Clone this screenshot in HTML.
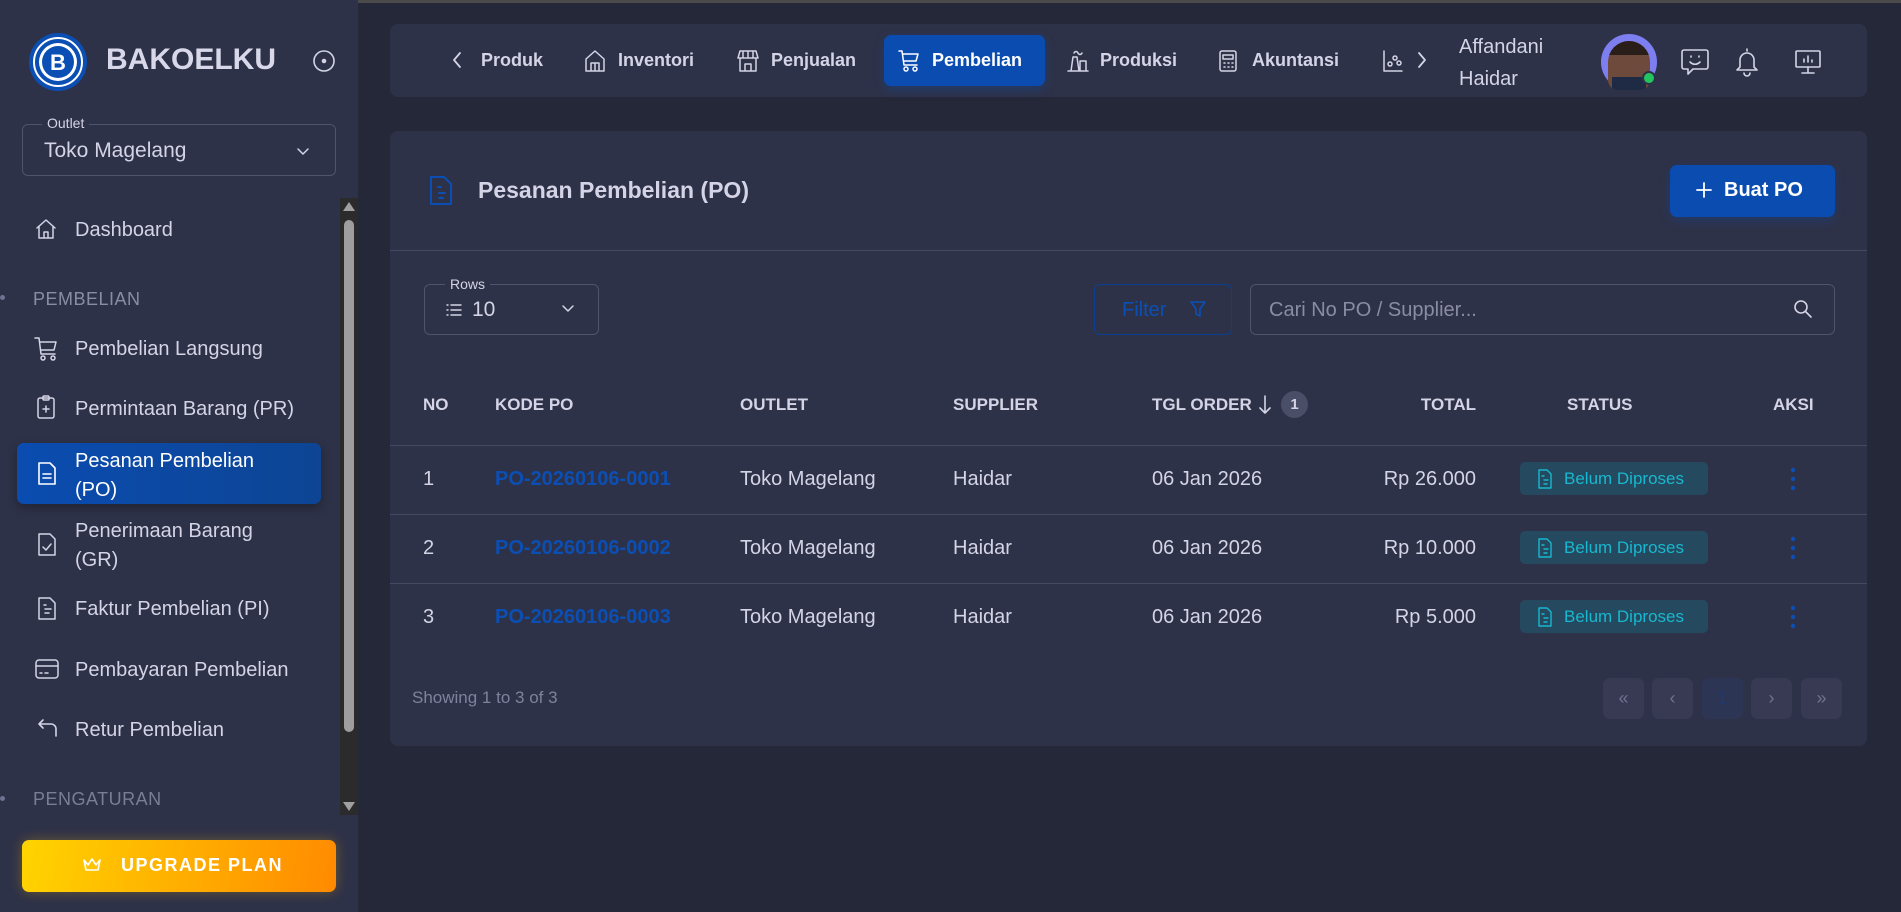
<!DOCTYPE html>
<html><head><meta charset="utf-8"><style>
*{box-sizing:border-box;margin:0;padding:0}
body{width:1901px;height:912px;overflow:hidden;background:#252839;font-family:"Liberation Sans",sans-serif;color:#d4d4e6;position:relative}
.a{position:absolute;white-space:nowrap}
svg{position:absolute;fill:none;stroke-linecap:round;stroke-linejoin:round}
.side{position:absolute;left:0;top:0;width:358px;height:912px;background:#2e3248}
.mi{font-size:20px;color:#d4d4e6}
.sec{font-size:18px;color:#8a8ca3;letter-spacing:.5px}
.nav{font-size:18px;font-weight:bold;color:#d4d4e6}
.th{font-size:17px;font-weight:bold;color:#d4d4e6}
.td{font-size:20px;color:#d4d4e6}
.link{font-size:20px;color:#0b4fb5;font-weight:bold}
.badge{position:absolute;left:1520px;width:188px;height:33px;background:#25495e;border-radius:5px;color:#17b8d0;font-size:17px}
.pg{position:absolute;top:678px;width:41px;height:41px;border-radius:7px;background:#373a52;color:#6f7390;font-size:18px;text-align:center;line-height:41px}
.dot{fill:#0b4fb5;stroke:none}
</style></head><body>
<div class="a" style="left:0;top:0;width:1901px;height:3px;background:#4a4a4a"></div>
<div class="side"></div>
<svg style="left:28px;top:32px" width="60" height="60" viewBox="0 0 60 60"><circle cx="30" cy="30" r="29" style="fill:#0b4fb5;stroke:none"/><circle cx="30" cy="30" r="24" stroke="#fff" stroke-width="2"/><circle cx="30" cy="30" r="19" style="fill:#fff;stroke:none"/><circle cx="30" cy="30" r="16" style="fill:#0b4fb5;stroke:none"/><text x="30" y="38" text-anchor="middle" font-size="22" font-weight="bold" style="fill:#fff" font-family="Liberation Sans">B</text></svg>
<div class="a" style="left:106px;top:43px;font-size:30px;font-weight:bold;color:#d8d8ea">BAKOELKU</div>
<svg style="left:312px;top:49px" width="24" height="24" viewBox="0 0 24 24" stroke="#d4d4e6" stroke-width="1.6"><circle cx="12" cy="12" r="10"/><circle cx="12" cy="12" r="1.5" style="fill:#d4d4e6"/></svg>
<div class="a" style="left:22px;top:124px;width:314px;height:52px;border:1px solid #4f536b;border-radius:6px"></div>
<div class="a" style="left:42px;top:115px;font-size:14px;background:#2e3248;padding:0 5px;color:#d4d4e6">Outlet</div>
<div class="a" style="left:44px;top:139px;font-size:21px">Toko Magelang</div>
<svg style="left:296px;top:144px" width="14" height="14" viewBox="0 0 14 14" stroke="#d4d4e6" stroke-width="1.5"><path d="M2 5l5 5 5-5"/></svg>
<div class="a" style="left:340px;top:198px;width:18px;height:617px;background:#2b2b2b"></div>
<div class="a" style="left:344px;top:220px;width:10px;height:512px;background:#9e9e9e;border-radius:5px"></div>
<div class="a" style="left:343px;top:202px;width:0;height:0;border-left:6px solid transparent;border-right:6px solid transparent;border-bottom:9px solid #a0a0a0"></div>
<div class="a" style="left:343px;top:802px;width:0;height:0;border-left:6px solid transparent;border-right:6px solid transparent;border-top:9px solid #a0a0a0"></div>
<svg style="left:34px;top:217px" width="24" height="24" viewBox="0 0 24 24" stroke="#d4d4e6" stroke-width="1.5"><path d="M3 11l9-8 9 8M5 9v12h14V9M10 21v-6h4v6"/></svg>
<div class="a mi" style="left:75px;top:219px">Dashboard</div>
<div class="a" style="left:0;top:295px;width:5px;height:5px;border-radius:50%;background:#6f7390"></div>
<div class="a sec" style="left:33px;top:289px">PEMBELIAN</div>
<svg style="left:34px;top:336px" width="24" height="26" viewBox="0 0 24 26" stroke="#d4d4e6" stroke-width="1.5"><path d="M1 2h4l2 16h14M6 6h16l-2 8H7"/><circle cx="9" cy="22" r="2"/><circle cx="19" cy="22" r="2"/></svg>
<div class="a mi" style="left:75px;top:338px">Pembelian Langsung</div>
<svg style="left:34px;top:394px" width="24" height="26" viewBox="0 0 24 26" stroke="#d4d4e6" stroke-width="1.5"><rect x="4" y="4" width="16" height="20" rx="2"/><rect x="9" y="2" width="6" height="4" rx="1"/><path d="M12 12v6M9 15h6"/></svg>
<div class="a mi" style="left:75px;top:398px">Permintaan Barang (PR)</div>
<div class="a" style="left:17px;top:443px;width:304px;height:61px;border-radius:7px;background:linear-gradient(90deg,#0a4cb0,#0d4594);box-shadow:0 4px 10px rgba(0,0,0,.3)"></div>
<svg style="left:36px;top:461px" width="22" height="26" viewBox="0 0 22 26" stroke="#fff" stroke-width="1.6"><path d="M3 2h11l5 5v16H3z"/><path d="M7 13h8M7 17h8"/></svg>
<div class="a mi" style="left:75px;top:447px;color:#fff;line-height:29px">Pesanan Pembelian<br>(PO)</div>
<svg style="left:36px;top:532px" width="22" height="26" viewBox="0 0 22 26" stroke="#d4d4e6" stroke-width="1.5"><path d="M3 2h11l5 5v16H3z"/><path d="M7 15l3 3 5-6"/></svg>
<div class="a mi" style="left:75px;top:517px;line-height:29px">Penerimaan Barang<br>(GR)</div>
<svg style="left:36px;top:596px" width="22" height="26" viewBox="0 0 22 26" stroke="#d4d4e6" stroke-width="1.5"><path d="M3 2h11l5 5v16H3z"/><path d="M8 9h2M9 13h6M9 17h4"/></svg>
<div class="a mi" style="left:75px;top:598px">Faktur Pembelian (PI)</div>
<svg style="left:34px;top:658px" width="26" height="22" viewBox="0 0 26 22" stroke="#d4d4e6" stroke-width="1.5"><rect x="2" y="2" width="22" height="18" rx="3"/><path d="M2 8h22M6 15h2M11 15h3"/></svg>
<div class="a mi" style="left:75px;top:659px">Pembayaran Pembelian</div>
<svg style="left:36px;top:716px" width="24" height="24" viewBox="0 0 24 24" stroke="#d4d4e6" stroke-width="1.6"><path d="M7 4L3 8l4 4M3 8h12a5 5 0 015 5v7"/></svg>
<div class="a mi" style="left:75px;top:719px">Retur Pembelian</div>
<div class="a" style="left:0;top:796px;width:5px;height:5px;border-radius:50%;background:#6f7390"></div>
<div class="a sec" style="left:33px;top:789px;color:#7a7d94">PENGATURAN</div>
<div class="a" style="left:22px;top:840px;width:314px;height:52px;border-radius:7px;background:linear-gradient(100deg,#ffd400,#ffa800 60%,#ff8a00);box-shadow:0 0 12px rgba(255,180,0,.3)"></div>
<svg style="left:82px;top:857px" width="20" height="16" viewBox="0 0 20 16" stroke="#fff" stroke-width="1.6"><path d="M2 3l4 5 4-6 4 6 4-5-2 10H4z"/></svg>
<div class="a" style="left:121px;top:855px;font-size:18px;font-weight:bold;color:#fff;letter-spacing:1.5px">UPGRADE PLAN</div>

<div class="a" style="left:390px;top:24px;width:1477px;height:73px;background:#2e3248;border-radius:8px"></div>
<svg style="left:451px;top:51px" width="12" height="18" viewBox="0 0 12 18" stroke="#d4d4e6" stroke-width="1.8"><path d="M9 2L3 9l6 7"/></svg>
<div class="a nav" style="left:481px;top:50px">Produk</div>
<svg style="left:584px;top:49px" width="22" height="24" viewBox="0 0 22 24" stroke="#d4d4e6" stroke-width="1.5"><path d="M2 10L11 2l9 8v12H2zM7 22v-8h8v8M11 14v8"/></svg>
<div class="a nav" style="left:618px;top:50px">Inventori</div>
<svg style="left:737px;top:49px" width="22" height="24" viewBox="0 0 22 24" stroke="#d4d4e6" stroke-width="1.5"><path d="M3 2h16l2 7H1zM3 9v13h16V9M8 22v-7h6v7M6 2v7M11 2v7M16 2v7"/></svg>
<div class="a nav" style="left:771px;top:50px">Penjualan</div>
<div class="a" style="left:884px;top:35px;width:161px;height:51px;background:#0a4cb0;border-radius:7px;box-shadow:0 4px 10px rgba(10,76,176,.35)"></div>
<svg style="left:898px;top:49px" width="22" height="24" viewBox="0 0 22 24" stroke="#fff" stroke-width="1.5"><path d="M1 2h3l2 14h13M5 5h15l-2 7H6"/><circle cx="8" cy="20" r="2"/><circle cx="17" cy="20" r="2"/></svg>
<div class="a nav" style="left:932px;top:50px;color:#fff">Pembelian</div>
<svg style="left:1066px;top:49px" width="24" height="24" viewBox="0 0 24 24" stroke="#d4d4e6" stroke-width="1.5"><path d="M2 22h20M5 22l2-14h4l2 14M14 22V12h6v10M8 4c1-2 3-2 4 0s3 2 4 0"/></svg>
<div class="a nav" style="left:1100px;top:50px">Produksi</div>
<svg style="left:1218px;top:49px" width="20" height="24" viewBox="0 0 20 24" stroke="#d4d4e6" stroke-width="1.5"><rect x="2" y="2" width="16" height="20" rx="2"/><path d="M5 6h10v4H5zM6 14h1M10 14h1M14 14h1M6 18h1M10 18h1M14 18h1"/></svg>
<div class="a nav" style="left:1252px;top:50px">Akuntansi</div>
<svg style="left:1382px;top:49px" width="22" height="24" viewBox="0 0 22 24" stroke="#d4d4e6" stroke-width="1.5"><path d="M2 2v20h18"/><circle cx="8" cy="15" r="2"/><circle cx="13" cy="9" r="2"/><circle cx="17" cy="14" r="2"/></svg>
<svg style="left:1416px;top:51px" width="12" height="18" viewBox="0 0 12 18" stroke="#d4d4e6" stroke-width="1.8"><path d="M3 2l6 7-6 7"/></svg>
<div class="a" style="left:1459px;top:31px;font-size:20px;line-height:32px;color:#d4d4e6">Affandani<br>Haidar</div>
<div class="a" style="left:1601px;top:34px;width:56px;height:56px;border-radius:50%;background:#7d7ff0"></div>
<div class="a" style="left:1608px;top:41px;width:42px;height:49px;border-radius:21px 21px 10px 10px;background:#6d4a3c;overflow:hidden"><div style="position:absolute;left:0;top:0;width:42px;height:14px;background:#2a1e1a"></div><div style="position:absolute;left:4px;top:36px;width:34px;height:13px;background:#1f2a44"></div></div>
<div class="a" style="left:1642px;top:71px;width:14px;height:14px;border-radius:50%;background:#22c55e;border:2px solid #2e3248"></div>
<svg style="left:1680px;top:47px" width="30" height="30" viewBox="0 0 30 30" stroke="#d4d4e6" stroke-width="1.6"><path d="M4 3h22a2 2 0 012 2v15a2 2 0 01-2 2H13l-5 5v-5H4a2 2 0 01-2-2V5a2 2 0 012-2z"/><path d="M11 9v1M19 9v1M10 15c3 3 7 3 10 0"/></svg>
<svg style="left:1734px;top:47px" width="26" height="30" viewBox="0 0 26 30" stroke="#d4d4e6" stroke-width="1.6"><path d="M13 2v2M6 20V13a7 7 0 0114 0v7l3 3H3zM10 26a3 3 0 006 0"/></svg>
<svg style="left:1794px;top:48px" width="28" height="28" viewBox="0 0 28 28" stroke="#d4d4e6" stroke-width="1.6"><rect x="2" y="3" width="24" height="16" rx="1"/><path d="M14 19v5M8 25h12M10 14v-3M14 14V8M18 14v-2"/></svg>

<div class="a" style="left:390px;top:131px;width:1477px;height:615px;background:#2e3248;border-radius:8px"></div>
<svg style="left:428px;top:175px" width="26" height="32" viewBox="0 0 26 32" stroke="#0b4fb5" stroke-width="2"><path d="M3 2h13l7 7v20H3z"/><path d="M10 12h3M11 18h6M11 23h4"/></svg>
<div class="a" style="left:478px;top:177px;font-size:23px;font-weight:bold;color:#d4d4e6">Pesanan Pembelian (PO)</div>
<div class="a" style="left:1670px;top:165px;width:165px;height:52px;background:#0a4cb0;border-radius:7px;box-shadow:0 4px 10px rgba(10,76,176,.3)"></div>
<svg style="left:1695px;top:181px" width="18" height="18" viewBox="0 0 18 18" stroke="#fff" stroke-width="1.8"><path d="M9 2v14M2 9h14"/></svg>
<div class="a" style="left:1724px;top:179px;font-size:20px;font-weight:bold;color:#fff">Buat PO</div>
<div class="a" style="left:390px;top:250px;width:1477px;height:1px;background:#454961"></div>

<div class="a" style="left:424px;top:284px;width:175px;height:51px;border:1px solid #4f536b;border-radius:6px"></div>
<div class="a" style="left:445px;top:276px;font-size:14px;background:#2e3248;padding:0 5px">Rows</div>
<svg style="left:446px;top:303px" width="16" height="14" viewBox="0 0 16 14" stroke="#d4d4e6" stroke-width="1.4"><path d="M1 2h1M1 7h1M1 12h1M5 2h10M5 7h10M5 12h10"/></svg>
<div class="a" style="left:472px;top:298px;font-size:21px">10</div>
<svg style="left:561px;top:303px" width="14" height="12" viewBox="0 0 14 12" stroke="#d4d4e6" stroke-width="1.5"><path d="M2 3l5 5 5-5"/></svg>
<div class="a" style="left:1094px;top:284px;width:138px;height:51px;border:1px solid #0b3f8f;border-radius:6px"></div>
<div class="a" style="left:1122px;top:299px;font-size:20px;color:#0b4fb5">Filter</div>
<svg style="left:1190px;top:300px" width="16" height="18" viewBox="0 0 16 18" stroke="#0b4fb5" stroke-width="1.6"><path d="M1 2h14l-5 7v7l-4-2V9z"/></svg>
<div class="a" style="left:1250px;top:284px;width:585px;height:51px;border:1px solid #4f536b;border-radius:6px"></div>
<div class="a" style="left:1269px;top:299px;font-size:20px;color:#8a8ca3">Cari No PO / Supplier...</div>
<svg style="left:1793px;top:299px" width="20" height="20" viewBox="0 0 20 20" stroke="#d4d4e6" stroke-width="1.6"><circle cx="8" cy="8" r="6"/><path d="M13 13l5 5"/></svg>

<div class="a th" style="left:423px;top:395px">NO</div>
<div class="a th" style="left:495px;top:395px">KODE PO</div>
<div class="a th" style="left:740px;top:395px">OUTLET</div>
<div class="a th" style="left:953px;top:395px">SUPPLIER</div>
<div class="a th" style="left:1152px;top:395px">TGL ORDER</div>
<svg style="left:1258px;top:394px" width="14" height="22" viewBox="0 0 14 22" stroke="#d4d4e6" stroke-width="1.6"><path d="M7 2v17M2 14l5 5 5-5"/></svg>
<div class="a" style="left:1281px;top:391px;width:27px;height:27px;border-radius:50%;background:#4a4e66;font-size:15px;font-weight:bold;text-align:center;line-height:27px">1</div>
<div class="a th" style="left:1420px;top:395px;width:56px;text-align:right">TOTAL</div>
<div class="a th" style="left:1567px;top:395px">STATUS</div>
<div class="a th" style="left:1773px;top:395px">AKSI</div>
<div class="a" style="left:390px;top:445px;width:1477px;height:1px;background:#454961"></div>
<div class="a" style="left:390px;top:514px;width:1477px;height:1px;background:#454961"></div>
<div class="a" style="left:390px;top:583px;width:1477px;height:1px;background:#454961"></div>

<div class="a td" style="left:423px;top:468px">1</div>
<div class="a link" style="left:495px;top:468px">PO-20260106-0001</div>
<div class="a td" style="left:740px;top:468px">Toko Magelang</div>
<div class="a td" style="left:953px;top:468px">Haidar</div>
<div class="a td" style="left:1152px;top:468px">06 Jan 2026</div>
<div class="a td" style="left:1300px;top:468px;width:176px;text-align:right">Rp 26.000</div>
<div class="badge" style="top:462px"></div>

<div class="a td" style="left:423px;top:537px">2</div>
<div class="a link" style="left:495px;top:537px">PO-20260106-0002</div>
<div class="a td" style="left:740px;top:537px">Toko Magelang</div>
<div class="a td" style="left:953px;top:537px">Haidar</div>
<div class="a td" style="left:1152px;top:537px">06 Jan 2026</div>
<div class="a td" style="left:1300px;top:537px;width:176px;text-align:right">Rp 10.000</div>
<div class="badge" style="top:531px"></div>

<div class="a td" style="left:423px;top:606px">3</div>
<div class="a link" style="left:495px;top:606px">PO-20260106-0003</div>
<div class="a td" style="left:740px;top:606px">Toko Magelang</div>
<div class="a td" style="left:953px;top:606px">Haidar</div>
<div class="a td" style="left:1152px;top:606px">06 Jan 2026</div>
<div class="a td" style="left:1300px;top:606px;width:176px;text-align:right">Rp 5.000</div>
<div class="badge" style="top:600px"></div>

<svg style="left:1537px;top:469px" width="16" height="20" viewBox="0 0 16 20" stroke="#17b8d0" stroke-width="1.4"><path d="M2 1h8l4 4v14H2z"/><path d="M5 7h2M7 11h4M7 15h3"/></svg>
<div class="a" style="left:1564px;top:469px;font-size:17px;color:#17b8d0">Belum Diproses</div>
<svg style="left:1537px;top:538px" width="16" height="20" viewBox="0 0 16 20" stroke="#17b8d0" stroke-width="1.4"><path d="M2 1h8l4 4v14H2z"/><path d="M5 7h2M7 11h4M7 15h3"/></svg>
<div class="a" style="left:1564px;top:538px;font-size:17px;color:#17b8d0">Belum Diproses</div>
<svg style="left:1537px;top:607px" width="16" height="20" viewBox="0 0 16 20" stroke="#17b8d0" stroke-width="1.4"><path d="M2 1h8l4 4v14H2z"/><path d="M5 7h2M7 11h4M7 15h3"/></svg>
<div class="a" style="left:1564px;top:607px;font-size:17px;color:#17b8d0">Belum Diproses</div>

<svg style="left:1787px;top:466px" width="12" height="26" viewBox="0 0 12 26"><circle class="dot" cx="6" cy="4" r="2.2"/><circle class="dot" cx="6" cy="13" r="2.2"/><circle class="dot" cx="6" cy="22" r="2.2"/></svg>
<svg style="left:1787px;top:535px" width="12" height="26" viewBox="0 0 12 26"><circle class="dot" cx="6" cy="4" r="2.2"/><circle class="dot" cx="6" cy="13" r="2.2"/><circle class="dot" cx="6" cy="22" r="2.2"/></svg>
<svg style="left:1787px;top:604px" width="12" height="26" viewBox="0 0 12 26"><circle class="dot" cx="6" cy="4" r="2.2"/><circle class="dot" cx="6" cy="13" r="2.2"/><circle class="dot" cx="6" cy="22" r="2.2"/></svg>

<div class="a" style="left:412px;top:688px;font-size:17px;color:#7f829a">Showing 1 to 3 of 3</div>
<div class="pg" style="left:1603px">«</div>
<div class="pg" style="left:1652px">‹</div>
<div class="pg" style="left:1702px;background:#2c3553;color:#24396b">1</div>
<div class="pg" style="left:1751px">›</div>
<div class="pg" style="left:1801px">»</div>
</body></html>
